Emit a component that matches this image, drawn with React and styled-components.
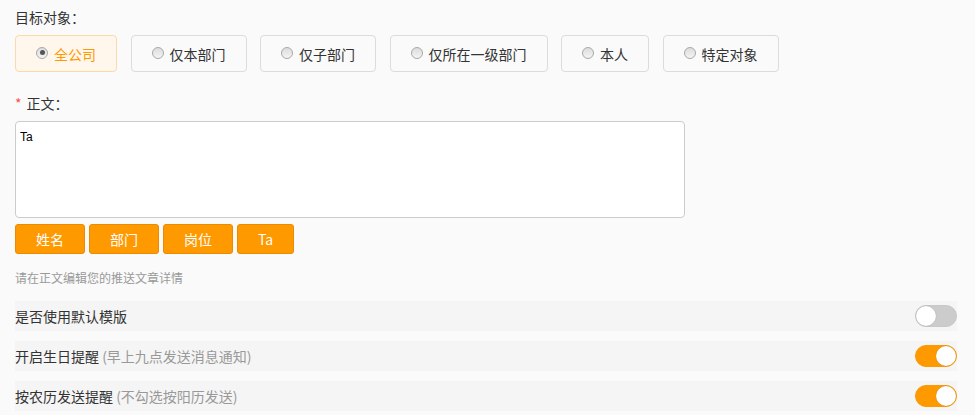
import React, { useState } from "react";
import styled, { createGlobalStyle } from "styled-components";

const Global = createGlobalStyle`
  html, body {
    margin: 0;
    padding: 0;
    background: #fafafa;
  }
  body {
    font-family: "Noto Sans CJK SC", "Liberation Sans", sans-serif;
    color: #333;
  }
`;

const Page = styled.div`
  padding: 6px 18px 0 15px;
  width: 975px;
  box-sizing: border-box;
`;

const Label = styled.div`
  font-size: 14px;
  line-height: 22px;
  color: #333;
  margin-top: ${({ top }) => top || 0}px;
  margin-bottom: 7px;
  span {
    color: #ff4d4f;
    margin-right: 5px;
  }
`;

const RadioGroup = styled.div`
  display: flex;
  gap: 13.5px;
`;

const RadioBox = styled.label`
  display: flex;
  align-items: center;
  gap: 6px;
  height: 37px;
  box-sizing: border-box;
  padding: 0 20px;
  border-radius: 4px;
  font-size: 14px;
  cursor: pointer;
  border: 1px solid ${({ active }) => (active ? "#fcd9a8" : "#dcdcdc")};
  background: ${({ active }) => (active ? "#fff7ec" : "#fafafa")};
  color: ${({ active }) => (active ? "#ff9900" : "#333")};
`;

const Dot = styled.i`
  width: 12px;
  height: 12px;
  border-radius: 50%;
  box-sizing: border-box;
  border: 1px solid #a9a9a9;
  background: linear-gradient(#dcdcdc, #f4f4f4);
  position: relative;
  margin-top: -2px;
  &::after {
    content: "";
    display: ${({ active }) => (active ? "block" : "none")};
    position: absolute;
    left: 2.5px;
    top: 2.5px;
    width: 5px;
    height: 5px;
    border-radius: 50%;
    background: #555;
  }
`;

const TextArea = styled.div`
  width: 670px;
  height: 97px;
  box-sizing: border-box;
  background: #fff;
  border: 1px solid #cccccc;
  border-radius: 4px;
  padding: 8px 4px;
  font-family: "Liberation Sans", Arial, sans-serif;
  font-size: 12px;
  color: #000;
`;

const Tags = styled.div`
  display: flex;
  gap: 4px;
  margin-top: 6px;
`;

const Tag = styled.button`
  height: 30px;
  padding: 0 20px;
  border: 1px solid #ec8a00;
  border-radius: 3px;
  background: #ff9900;
  color: #fff;
  font-size: 14px;
  font-family: "Noto Sans CJK SC", "Liberation Sans", sans-serif;
  min-width: ${({ wide }) => (wide ? 70 : 0)}px;
`;

const Hint = styled.div`
  margin-top: 14px;
  font-size: 12px;
  line-height: 20px;
  color: #999;
`;

const Switches = styled.div`
  margin-top: 13px;
  display: flex;
  flex-direction: column;
  gap: 10px;
`;

const Row = styled.div`
  height: 30px;
  background: #f5f5f5;
  display: flex;
  align-items: center;
  justify-content: space-between;
  font-size: 14px;
  color: #333;
  small {
    font-size: 14px;
    color: #999;
  }
`;

const Toggle = styled.div`
  width: 42px;
  height: 22px;
  border-radius: 11px;
  box-sizing: border-box;
  border: 1px solid ${({ on }) => (on ? "#ff9900" : "#c8c8c8")};
  background: ${({ on }) => (on ? "#ff9900" : "#cccccc")};
  display: flex;
  justify-content: ${({ on }) => (on ? "flex-end" : "flex-start")};
  &::after {
    content: "";
    width: 20px;
    height: 20px;
    border-radius: 50%;
    background: #fff;
    box-shadow: 0 0 1px rgba(0, 0, 0, 0.3);
  }
`;

const targets = ["全公司", "仅本部门", "仅子部门", "仅所在一级部门", "本人", "特定对象"];

export default function App() {
  const [target, setTarget] = useState(0);
  return (
    <Page>
      <Global />
      <Label>目标对象：</Label>
      <RadioGroup>
        {targets.map((t, i) => (
          <RadioBox key={t} active={i === target} onClick={() => setTarget(i)}>
            <Dot active={i === target} />
            {t}
          </RadioBox>
        ))}
      </RadioGroup>
      <Label top={20}>
        <span>*</span>正文：
      </Label>
      <TextArea>Ta</TextArea>
      <Tags>
        <Tag wide>姓名</Tag>
        <Tag wide>部门</Tag>
        <Tag wide>岗位</Tag>
        <Tag>Ta</Tag>
      </Tags>
      <Hint>请在正文编辑您的推送文章详情</Hint>
      <Switches>
        <Row>
          是否使用默认模版
          <Toggle />
        </Row>
        <Row>
          <div>
            开启生日提醒 <small>(早上九点发送消息通知)</small>
          </div>
          <Toggle on />
        </Row>
        <Row>
          <div>
            按农历发送提醒 <small>(不勾选按阳历发送)</small>
          </div>
          <Toggle on />
        </Row>
      </Switches>
    </Page>
  );
}
